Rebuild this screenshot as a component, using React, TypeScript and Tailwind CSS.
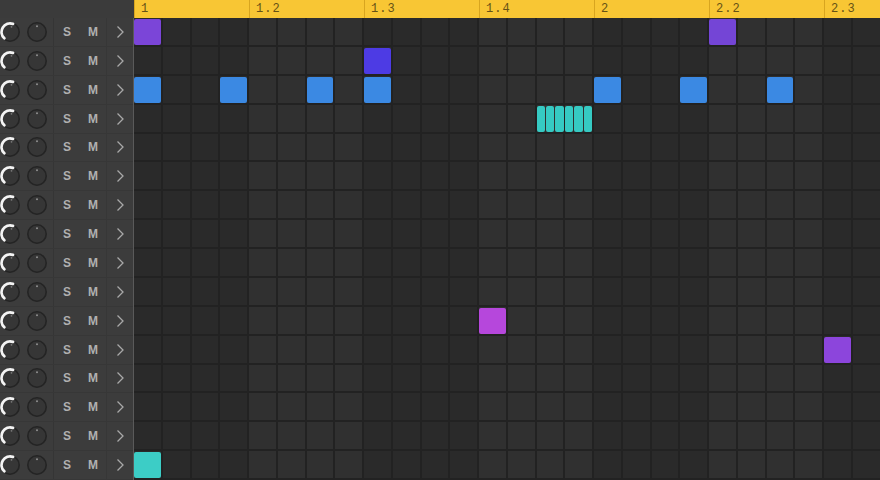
import React from "react";

const COLS = 26;
const ROWS = 16;

type Note = { r: number; c: number; color: string; span?: number; sub?: number };

const notes: Note[] = [
  { r: 0, c: 0, color: "#7b45d8" },
  { r: 0, c: 20, color: "#7445d6" },
  { r: 1, c: 8, color: "#4d3be4" },
  { r: 2, c: 0, color: "#3b89e3" },
  { r: 2, c: 3, color: "#3b89e3" },
  { r: 2, c: 6, color: "#3b89e3" },
  { r: 2, c: 8, color: "#3b89e3" },
  { r: 2, c: 16, color: "#3b89e3" },
  { r: 2, c: 19, color: "#3b89e3" },
  { r: 2, c: 22, color: "#3b89e3" },
  { r: 3, c: 14, color: "#36cac3", span: 2, sub: 6 },
  { r: 10, c: 12, color: "#b647dc" },
  { r: 11, c: 24, color: "#8c45dc" },
  { r: 15, c: 0, color: "#3ccdc6" },
];

const markers = [
  { c: 0, label: "1" },
  { c: 4, label: "1.2" },
  { c: 8, label: "1.3" },
  { c: 12, label: "1.4" },
  { c: 16, label: "2" },
  { c: 20, label: "2.2" },
  { c: 24, label: "2.3" },
];

function Knob({ arc }: { arc: boolean }) {
  return (
    <svg width="22" height="22" viewBox="0 0 22 22" className="shrink-0">
      <circle cx="11" cy="11" r="9.2" fill="#363636" stroke="#242424" strokeWidth="1.6" />
      {arc ? (
        <path
          d="M 5.3 17.3 A 8.6 8.6 0 0 1 14 2.9"
          fill="none"
          stroke="#f4f4f4"
          strokeWidth="2.8"
          strokeLinecap="round"
        />
      ) : (
        <circle cx="11" cy="5.2" r="1" fill="#8f8f8f" />
      )}
      {arc && <circle cx="12.5" cy="5.8" r="0.9" fill="#7a7a7a" />}
    </svg>
  );
}

function TrackRow() {
  return (
    <div className="flex items-center h-[28.875px] border-b border-[#373737]">
      <div className="w-[54px] flex items-center shrink-0 border-r border-[#353535] h-full">
        <div className="-ml-[1px]">
          <Knob arc />
        </div>
        <div className="ml-[5px]">
          <Knob arc={false} />
        </div>
      </div>
      <div className="w-[26px] text-center text-[12px] font-bold text-[#b0b0b0]">S</div>
      <div className="w-[27px] text-center text-[12px] font-bold text-[#b0b0b0] border-r border-[#373737] h-full flex items-center justify-center">
        M
      </div>
      <div className="flex-1 flex justify-center">
        <svg width="10" height="14" viewBox="0 0 10 14">
          <path d="M 2.5 1.5 L 8 7 L 2.5 12.5" fill="none" stroke="#a8a8a8" strokeWidth="1.3" />
        </svg>
      </div>
    </div>
  );
}

export default function App() {
  const cells = [];
  for (let r = 0; r < ROWS; r++) {
    for (let c = 0; c < COLS; c++) {
      const light = Math.floor(c / 4) % 2 === 1;
      cells.push(
        <div
          key={`${r}-${c}`}
          className={`${light ? "bg-[#303030]" : "bg-[#2a2a2a]"} border-r-2 border-b-2 border-[#222222]`}
          style={{ gridRow: r + 1, gridColumn: c + 1 }}
        />
      );
    }
  }

  return (
    <div
      className="w-[880px] h-[480px] overflow-hidden bg-[#2a2a2a] flex flex-col"
      style={{ fontFamily: "'Liberation Sans', Arial, sans-serif" }}
    >
      <div className="flex h-[18px] shrink-0">
        <div className="w-[134px] bg-[#3b3b3b] shrink-0" />
        <div className="flex-1 bg-[#f8c634] relative overflow-hidden">
          <div className="grid grid-cols-[repeat(26,28.75px)] h-full">
            {markers.map((m) => (
              <div
                key={m.label}
                className="h-full border-l border-[#d8a51f] pl-[6px] pt-[3px] text-[12px] leading-none text-[#665216] tracking-[1px]"
                style={{ gridColumn: `${m.c + 1} / span 4`, gridRow: 1, fontFamily: "'Liberation Mono', monospace" }}
              >
                {m.label}
              </div>
            ))}
          </div>
        </div>
      </div>
      <div className="flex flex-1 overflow-hidden">
        <div className="w-[134px] shrink-0 bg-[#3c3c3c] border-r border-[#5a5a5a]">
          {Array.from({ length: ROWS }).map((_, i) => (
            <TrackRow key={i} />
          ))}
        </div>
        <div className="flex-1 overflow-hidden">
          <div className="grid grid-cols-[repeat(26,28.75px)] grid-rows-[repeat(16,28.875px)]">
            {cells}
            {notes.map((n, i) => (
              <div
                key={`n${i}`}
                className="pr-[2px] pb-[2px] pt-[1px] flex gap-[1px]"
                style={{ gridRow: n.r + 1, gridColumn: `${n.c + 1} / span ${n.span ?? 1}` }}
              >
                {n.sub ? (
                  Array.from({ length: n.sub }).map((_, k) => (
                    <div key={k} className="flex-1 rounded-[2px]" style={{ backgroundColor: n.color }} />
                  ))
                ) : (
                  <div className="flex-1 rounded-[2px]" style={{ backgroundColor: n.color }} />
                )}
              </div>
            ))}
          </div>
        </div>
      </div>
    </div>
  );
}
